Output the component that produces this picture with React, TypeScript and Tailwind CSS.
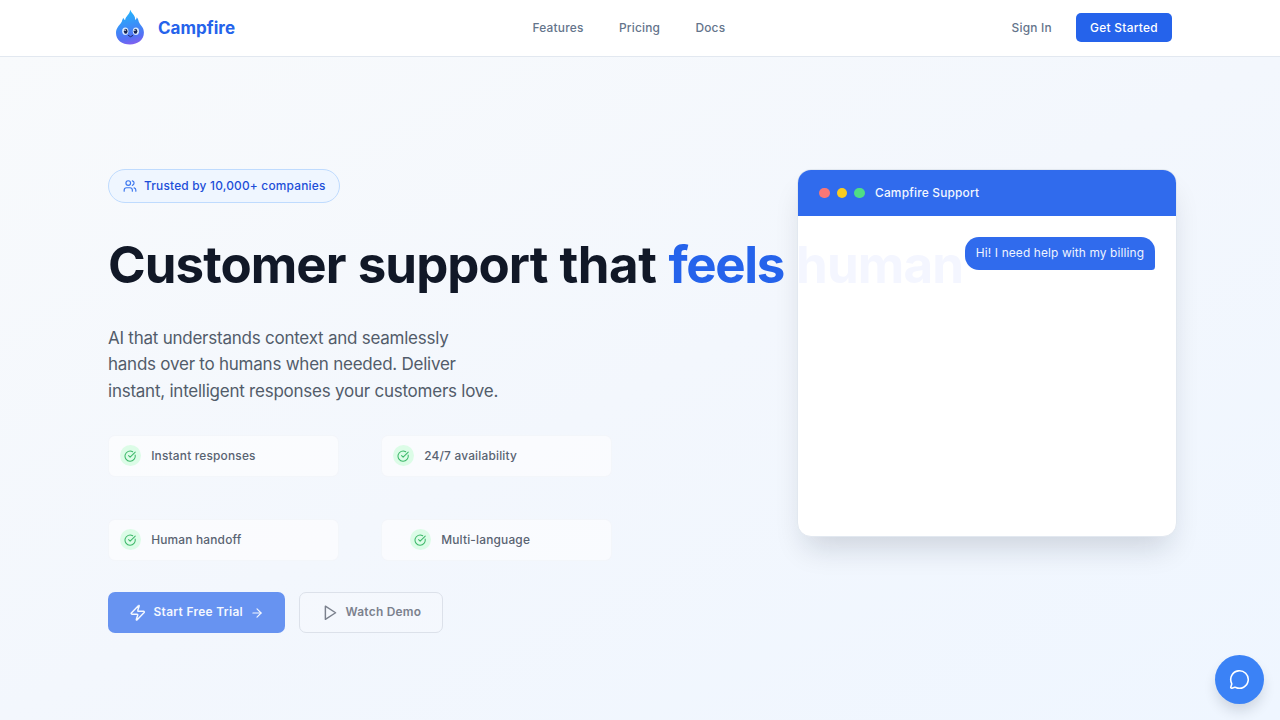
import React from "react";
import { ArrowRight, CircleCheckBig, MessageCircle, Users, Zap } from "lucide-react";

function Mascot() {
  return (
    <svg viewBox="0 0 36 40" className="h-10 w-9 shrink-0" aria-hidden="true">
      <defs>
        <linearGradient id="flame" x1="0.4" y1="0" x2="0.6" y2="1">
          <stop offset="0" stopColor="#22b5fb" />
          <stop offset="0.5" stopColor="#3d8cf8" />
          <stop offset="0.8" stopColor="#5570f4" />
          <stop offset="1" stopColor="#8260f0" />
        </linearGradient>
      </defs>
      <path
        d="M18.2 1.8C18.8 4.4 21.8 6 22.8 8.9C23.1 10 23 11.3 23.2 12C24.2 11.2 24.7 10.4 24.7 9.3C26.4 10.6 26.2 13 27.4 15C29.4 18.2 31.9 19.8 31.9 24.6C31.9 32 26 36.5 18 36.5C10 36.5 4 32.2 4 25C4 20.3 7 17.8 9 15.1C10.3 13.4 10.2 11.3 11.4 9.8C11.7 11 12.3 11.7 13.1 12C13.8 8.1 17.9 6.2 18.2 1.8Z"
        fill="url(#flame)"
      />
      <ellipse cx="13.3" cy="23.2" rx="3.1" ry="3.7" fill="#d9ebff" />
      <ellipse cx="23.9" cy="23.2" rx="3.1" ry="3.7" fill="#d9ebff" />
      <ellipse cx="13.7" cy="23.2" rx="1.8" ry="2.5" fill="#17244f" />
      <ellipse cx="23.5" cy="23.2" rx="1.8" ry="2.5" fill="#17244f" />
      <circle cx="13.1" cy="22.2" r="0.7" fill="#fff" />
      <circle cx="22.9" cy="22.2" r="0.7" fill="#fff" />
      <path d="M16.4 27.6Q18.6 30.2 20.8 27.6" fill="none" stroke="#1e2a6b" strokeWidth="1" strokeLinecap="round" />
    </svg>
  );
}

function PlayIcon() {
  return (
    <svg
      viewBox="0 0 24 24"
      className="mr-[7px] size-[17.5px]"
      fill="none"
      stroke="currentColor"
      strokeWidth="2"
      strokeLinecap="round"
      strokeLinejoin="round"
      aria-hidden="true"
    >
      <polygon points="6 3 20 12 6 21 6 3" />
    </svg>
  );
}

function Header() {
  return (
    <header className="h-[57px] border-b border-[#e2e8f0] bg-white">
      <div className="mx-auto flex h-14 w-[1064px] items-center text-[11.9px] font-medium tracking-[0.21px] text-[#64748b]">
        <div className="flex w-[424.5px] items-center pl-1">
          <Mascot />
          <span className="mt-[2px] ml-[10px] text-[17px] font-bold tracking-[0.03px] text-[#2563eb]">Campfire</span>
        </div>
        <nav className="flex gap-[35.3px]">
          <a>Features</a>
          <a>Pricing</a>
          <a>Docs</a>
        </nav>
        <div className="ml-auto flex items-center gap-[24px]">
          <a className="tracking-[0.25px]">Sign In</a>
          <button className="mb-px h-[29px] w-24 rounded-[5px] bg-[#2563eb] pt-px font-medium tracking-[0.3px] text-white">
            Get Started
          </button>
        </div>
      </div>
    </header>
  );
}

function Feature({ label, shifted = false }: { label: string; shifted?: boolean }) {
  return (
    <div
      className={`flex h-[42px] items-center rounded-[7px] border border-[#f1f4f9]/80 bg-white/55 ${
        shifted ? "pl-[28px]" : "pl-[11px]"
      }`}
    >
      <span className="mb-px flex size-[21px] items-center justify-center rounded-full bg-[#dcfce7]">
        <CircleCheckBig className="size-[12.25px] text-[#3bb768]" />
      </span>
      <span className="ml-[10.2px] text-[11.9px] font-medium tracking-[0.19px] text-[#596372]">{label}</span>
    </div>
  );
}

function ChatCard() {
  return (
    <div className="h-[368px] w-[380px] overflow-hidden rounded-[14px] border border-[#e2e8f0] bg-white shadow-[0_18px_30px_-8px_rgba(15,23,42,0.16)]">
      <div className="flex h-[46px] items-center bg-[#306bed] pl-[21px]">
        <div className="flex gap-[7px]">
          <span className="size-[10.5px] rounded-full bg-[#f87777]" />
          <span className="size-[10.5px] rounded-full bg-[#facc1f]" />
          <span className="size-[10.5px] rounded-full bg-[#4fde85]" />
        </div>
        <span className="ml-[10.5px] text-[11.9px] font-medium tracking-[0.2px] text-[#f3f7ff]">Campfire Support</span>
      </div>
      <div className="flex justify-end p-[21px]">
        <p className="flex h-[33px] w-[190px] items-center justify-center rounded-[14px] rounded-br-[3.5px] bg-[#306bed] pb-[2px] text-[11.9px] tracking-[0.13px] whitespace-nowrap text-[#eef4ff]">
          Hi! I need help with my billing
        </p>
      </div>
    </div>
  );
}

export default function App() {
  return (
    <div className="h-[720px] w-[1280px] overflow-hidden bg-white font-['Inter',sans-serif] antialiased">
      <Header />
      <main className="h-[663px] bg-linear-to-br from-[#f8fafc] via-[#f3f7fd] to-[#eff6ff]">
        <div className="mx-auto flex w-[1064px] pt-[112px]">
          <section className="relative z-10 w-[504px] shrink-0">
            <div className="flex h-[34px] w-[232px] items-center rounded-full border border-[#bfdbfe] bg-[#eff6ff] pl-[14px] text-[11.9px] font-medium tracking-[0.2px] text-[#1d4ed8]">
              <Users className="mr-[7px] size-[14px] text-[#3b76ee]" />
              Trusted by 10,000+ companies
            </div>
            <h1 className="mt-[29px] text-[51px] leading-[66px] font-bold tracking-[-0.95px] [word-spacing:1px] whitespace-nowrap text-[#111827]">
              Customer support <span className="tracking-[-0.5px]">that</span>{" "}
              <span className="tracking-[-1.4px] text-[#2563eb]">feels</span>{" "}
              <span className="tracking-[-0.85px] text-[#f4f6ff]">human</span>
            </h1>
            <p className="mt-[27px] text-[17px] leading-[26.4px] tracking-[-0.24px] text-[#525c6a]">
              AI that understands context and seamlessly
              <br />
              hands over to humans when needed. Deliver
              <br />
              instant, intelligent responses your customers love.
            </p>
            <div className="mt-[31px] grid grid-cols-2 gap-x-[42px] gap-y-[42px]">
              <Feature label="Instant responses" />
              <Feature label="24/7 availability" />
              <Feature label="Human handoff" />
              <Feature label="Multi-language" shifted />
            </div>
            <div className="mt-[31px] flex gap-[14px] text-[11.9px] font-semibold">
              <button className="flex h-[41px] w-[177px] items-center rounded-[7px] bg-[#6793f1] pl-[21px] tracking-[0.33px] text-[#f4f8ff]">
                <Zap className="mr-[7px] size-[17.5px]" />
                <span className="mb-[2px]">Start Free Trial</span>
                <ArrowRight className="ml-[7px] size-[14px]" />
              </button>
              <button className="flex h-[41px] w-36 items-center rounded-[7px] border border-[#dce1ea] bg-white/20 pl-[21px] tracking-[0.27px] text-[#7b818d]">
                <PlayIcon />
                <span className="mb-[2px]">Watch Demo</span>
              </button>
            </div>
          </section>
          <section className="ml-[185px] shrink-0">
            <ChatCard />
          </section>
        </div>
      </main>
      <button className="fixed right-4 bottom-4 flex size-[49px] items-center justify-center rounded-full bg-[#3b82f6] text-white shadow-[0_8px_14px_-2px_rgba(15,23,42,0.16)]">
        <MessageCircle className="size-[21px]" strokeWidth={1.8} />
      </button>
    </div>
  );
}
